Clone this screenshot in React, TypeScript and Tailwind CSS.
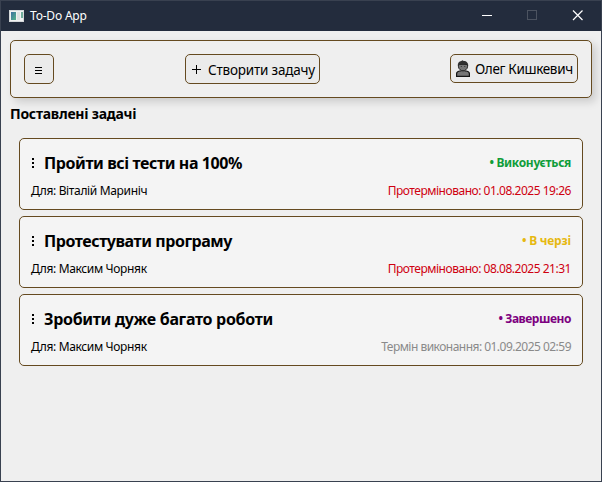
type Task = {
  title: string;
  titleClass: string;
  assignee: string;
  status: string;
  statusClass: string;
  due: string;
  dueClass: string;
};

const tasks: Task[] = [
  {
    title: 'Пройти всі тести на 100%',
    titleClass: 'tracking-[-0.41px]',
    assignee: 'Для: Віталій Мариніч',
    status: '• Виконується',
    statusClass: 'text-[#0f9d3a] tracking-[-0.3px]',
    due: 'Протерміновано: 01.08.2025 19:26',
    dueClass: 'text-[#cf0010] tracking-[-0.48px]',
  },
  {
    title: 'Протестувати програму',
    titleClass: 'tracking-[-0.44px]',
    assignee: 'Для: Максим Чорняк',
    status: '• В черзі',
    statusClass: 'text-[#e6b810] tracking-[-0.2px]',
    due: 'Протерміновано: 08.08.2025 21:31',
    dueClass: 'text-[#cf0010] tracking-[-0.48px]',
  },
  {
    title: 'Зробити дуже багато роботи',
    titleClass: 'tracking-[-0.31px]',
    assignee: 'Для: Максим Чорняк',
    status: '• Завершено',
    statusClass: 'text-[#7d0080] tracking-[-0.45px]',
    due: 'Термін виконання: 01.09.2025 02:59',
    dueClass: 'text-[#8a8a8a] tracking-[-0.52px]',
  },
];

function AppIcon() {
  return (
    <svg className="shrink-0" width="15" height="12" viewBox="0 0 15 12" shapeRendering="crispEdges">
      <defs>
        <linearGradient id="screen" x1="0" y1="0" x2="1" y2="1">
          <stop offset="0" stopColor="#3d6fa0" />
          <stop offset="1" stopColor="#56b58a" />
        </linearGradient>
      </defs>
      <rect width="15" height="12" fill="#d5d8da" />
      <rect x="1" y="1" width="13" height="10" fill="#f1f2f2" />
      <rect x="2" y="2" width="5" height="8" fill="url(#screen)" />
      <rect x="8" y="2" width="3" height="8" fill="#dfe2e2" />
      <rect x="12" y="2" width="2" height="6" fill="#72ad9c" />
    </svg>
  );
}

function UserIcon() {
  return (
    <svg className="shrink-0" width="14" height="17" viewBox="0 0 14 17">
      <path d="M.6 16.400v-2.600c0-1.800 1.100-2.500 3-2.800h6.800c1.900.3 3 1 3 2.800v2.600z" fill="#777" stroke="#151515" strokeWidth="1.200" />
      <path d="M5 9h4v2.500l-2 1-2-1z" fill="#666" />
      <path d="M2.500 4.500h9v2.300c0 2.200-2.400 4-4.500 4s-4.500-1.800-4.500-4z" fill="#777" stroke="#222" />
      <path d="M1.800 6.200C1.500 3 3 1.300 5.300 1l1.200-.8 1.200.7c2.800 0 4.900 2 4.500 5.300L10.500 4 7.500 5 4 4.500z" fill="#303030" />
      <path d="M4.800 6.500h1M8.300 6.500h1" stroke="#333" />
    </svg>
  );
}

function TaskCard({ task }: { task: Task }) {
  return (
    <article className="flex h-[72px] flex-col rounded-[5px] border border-[#654a20] bg-[#f4f4f4] px-[11px] pt-[13px]">
      <div className="flex h-[22px] items-center">
        <svg className="mr-[9px] shrink-0" width="4" height="10" shapeRendering="crispEdges">
          <path d="M1 0h2v2H1zM1 4h2v2H1zM1 8h2v2H1z" fill="#000" />
        </svg>
        <h2 className={`text-[16px] leading-[22px] font-bold ${task.titleClass}`}>{task.title}</h2>
        <span className={`ml-auto text-[12px] leading-[22px] font-bold ${task.statusClass}`}>{task.status}</span>
      </div>
      <div className="mt-[9px] flex justify-between text-[12px] leading-[16px]">
        <span className="tracking-[-0.35px]">{task.assignee}</span>
        <span className={task.dueClass}>{task.due}</span>
      </div>
    </article>
  );
}

export default function App() {
  return (
    <div className="flex h-[482px] w-[602px] flex-col overflow-hidden border border-[#394150] bg-[#efefef] font-['Noto_Sans','Open_Sans',sans-serif] whitespace-nowrap text-black">
      <header className="flex h-[30px] shrink-0 items-center bg-[#232c3d] pl-[8px] text-white">
        <AppIcon />
        <span className="ml-[6px] text-[12px] leading-[16px] tracking-[-0.2px]">To-Do App</span>
        <svg className="ml-auto" width="138" height="30">
          <path d="M19 14.500h10" stroke="#fff" />
          <rect x="64.500" y="9.500" width="9" height="9" fill="none" stroke="#4c5360" />
          <path d="M110 9.500l9.500 9.500M119.500 9.500L110 19" stroke="#fff" strokeWidth="1.200" />
        </svg>
      </header>
      <main className="flex flex-1 flex-col pt-[9px] pr-[9px] pl-[9px]">
        <nav className="flex h-[58px] shrink-0 items-start justify-between rounded-[5px] border border-[#654a20] bg-[#efefef] px-[13px] pt-[13px] shadow-[4px_4px_9px_rgba(0,0,0,0.15)]">
          <button className="flex h-[30px] w-[30px] items-center justify-center rounded-[5px] border border-[#654a20] bg-[#ebebeb]">
            <svg className="mt-[2px] mr-px" width="7" height="7" shapeRendering="crispEdges">
              <path d="M0 .5h7M0 3.500h7M0 6.500h7" stroke="#000" />
            </svg>
          </button>
          <button className="ml-[1px] flex h-[30px] w-[135px] items-center rounded-[5px] border border-[#654a20] bg-[#ebebeb] pl-[6px]">
            <svg className="shrink-0" width="9" height="9" shapeRendering="crispEdges">
              <path d="M0 4.500h9M4.500 0v9" stroke="#000" />
            </svg>
            <span className="ml-[7px] pt-[2px] text-[13.5px] leading-[20px] tracking-[-0.2px]">Створити задачу</span>
          </button>
          <button className="flex h-[29px] w-[128px] items-center rounded-[5px] border border-[#654a20] bg-[#ebebeb] pl-[5px]">
            <UserIcon />
            <span className="ml-[5px] pt-px text-[13.5px] leading-[20px] tracking-[-0.33px]">Олег Кишкевич</span>
          </button>
        </nav>
        <h1 className="mt-[6px] text-[14px] leading-[20px] font-bold tracking-[-0.25px]">Поставлені задачі</h1>
        <section className="mx-[9px] mt-[14px] flex flex-col gap-[6px]">
          {tasks.map((task) => (
            <TaskCard key={task.title} task={task} />
          ))}
        </section>
      </main>
    </div>
  );
}
